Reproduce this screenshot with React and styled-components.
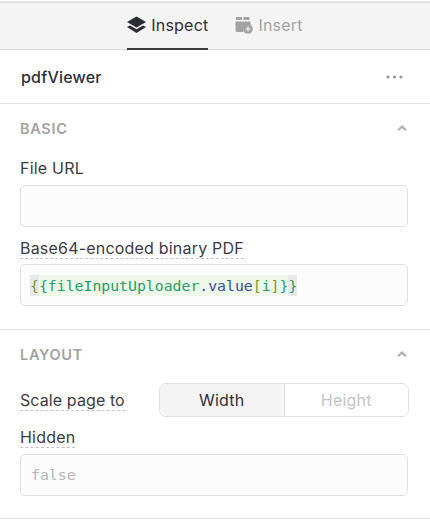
import React from 'react'
import styled, { createGlobalStyle } from 'styled-components'

const GlobalStyle = createGlobalStyle`
  html, body {
    margin: 0;
    background: #fff;
    font-family: Inter, "Liberation Sans", sans-serif;
  }
`

const Panel = styled.div`
  width: 430px;
  height: 523px;
  overflow: hidden;
  box-sizing: border-box;
  padding-top: 1px;
  background: #fff;
`

const Tabs = styled.div`
  display: flex;
  justify-content: center;
  gap: 27px;
  height: 49px;
  box-sizing: border-box;
  background: #f4f4f4;
  border-top: 2px solid #e3e3e3;
  border-bottom: 1px solid #dcdcdc;
`

const Tab = styled.div`
  display: flex;
  align-items: center;
  gap: 5px;
  height: 47px;
  box-sizing: border-box;
  padding-bottom: 2px;
  font-size: 16px;
  letter-spacing: 0.2px;
  color: ${p => (p.$active ? '#2f2f3a' : '#a3a3a3')};
  border-bottom: 2px solid ${p => (p.$active ? '#3a3a3a' : 'transparent')};
`

const NameRow = styled.div`
  display: flex;
  align-items: center;
  justify-content: space-between;
  height: 54px;
  box-sizing: border-box;
  padding: 0 27px 0 21px;
  border-bottom: 1px solid #e0e0e0;
`

const WidgetName = styled.div`
  font-size: 16px;
  font-weight: 500;
  letter-spacing: 0.2px;
  color: #2f2f3a;
`

const Section = styled.section`
  box-sizing: border-box;
  height: ${p => p.$height}px;
  padding: 14px 22px 0 20px;
  border-bottom: 1px solid #e3e3e3;
`

const SectionHeader = styled.div`
  display: flex;
  align-items: center;
  justify-content: space-between;
  height: 20px;
  margin-bottom: ${p => p.$gap}px;
  font-size: 14.5px;
  font-weight: 600;
  letter-spacing: 0.7px;
  color: #a2a2a2;
`

const Label = styled.div`
  display: flex;
  align-items: flex-end;
  height: 20px;
  margin-bottom: ${p => p.$gap || 7}px;
  font-size: 16px;
  letter-spacing: 0.2px;
  color: #3b3b44;
`

const Dashed = styled.span`
  border-bottom: 1px dashed #c4c4c4;
  line-height: 20px;
`

const Input = styled.div`
  display: flex;
  align-items: center;
  height: 42px;
  box-sizing: border-box;
  margin-bottom: ${p => p.$gap || 0}px;
  padding: 0 9px;
  background: #fcfcfc;
  border: 1px solid #e0e0e0;
  border-radius: 5px;
  font-family: "DejaVu Sans Mono", "Liberation Mono", monospace;
  font-size: 14.8px;
  color: #b5b5b5;
`

const Placeholder = styled.span`
  padding: 0 0 2px 1px;
`

const Code = styled.span`
  display: inline-block;
  line-height: 21px;
  background: ${p => (p.$outer ? '#e8e8e8' : '#eff7ea')};
  color: ${p => p.$color || '#22a06b'};
`

const Token = styled.span`
  color: ${p => p.$color};
`

const ScaleRow = styled.div`
  display: flex;
  align-items: center;
  justify-content: space-between;
  height: 34px;
  margin-right: -1px;
  margin-bottom: 11px;
  font-size: 16px;
  letter-spacing: 0.1px;
  color: #3b3b44;
`

const Segmented = styled.div`
  display: flex;
  width: 250px;
  height: 34px;
  box-sizing: border-box;
  border: 1px solid #e0e0e0;
  border-radius: 7px;
  overflow: hidden;
`

const Segment = styled.div`
  flex: 1;
  display: flex;
  align-items: center;
  justify-content: center;
  font-size: 16px;
  letter-spacing: 0.2px;
  background: ${p => (p.$active ? '#f4f4f4' : '#fff')};
  color: ${p => (p.$active ? '#2f2f3a' : '#c4c4c4')};
  border-right: ${p => (p.$active ? '1px solid #e0e0e0' : 'none')};
`

const Chevron = () => (
  <svg width="12" height="8" viewBox="0 0 12 8" fill="none" stroke="#b0b0b0" strokeWidth="2.2">
    <path d="M2 6.2 6 2.6l4 3.6" />
  </svg>
)

const LayersIcon = () => (
  <svg width="19" height="20" viewBox="0 0 19 20" fill="#2b2b33">
    <path d="M9.5 1.5 19 7l-9.5 5.5L0 7z" />
    <path d="M3 10.4l6.5 3.9 6.5-3.9L19 12l-9.5 6L0 12z" />
  </svg>
)

const InsertIcon = () => (
  <svg width="18" height="20" viewBox="0 0 18 20" fill="#a3a3a3">
    <rect x="1" y="2" width="6" height="3" />
    <rect x="8.5" y="2" width="6" height="3" />
    <path d="M0.5 6.5h15v5A5.5 5.5 0 0 0 8.4 17H2A1.5 1.5 0 0 1 0.5 15.5z" />
    <circle cx="13" cy="14" r="4.8" />
    <path d="M13 11.6v4.8M10.6 14h4.8" stroke="#f4f4f4" strokeWidth="1.2" />
  </svg>
)

const MoreIcon = () => (
  <svg width="17" height="4" viewBox="0 0 17 4" fill="#999">
    <circle cx="2" cy="2" r="1.6" />
    <circle cx="8.5" cy="2" r="1.6" />
    <circle cx="15" cy="2" r="1.6" />
  </svg>
)

export default function App() {
  return (
    <Panel>
      <GlobalStyle />
      <Tabs>
        <Tab $active>
          <LayersIcon />
          Inspect
        </Tab>
        <Tab>
          <InsertIcon />
          Insert
        </Tab>
      </Tabs>
      <NameRow>
        <WidgetName>pdfViewer</WidgetName>
        <MoreIcon />
      </NameRow>
      <Section $height={226}>
        <SectionHeader $gap={20}>
          BASIC
          <Chevron />
        </SectionHeader>
        <Label>File URL</Label>
        <Input $gap={12} />
        <Label $gap={5}>
          <Dashed>Base64-encoded binary PDF</Dashed>
        </Label>
        <Input>
          <Code $outer $color="#7c9a2d">{'{'}</Code>
          <Code>
            {'{'}fileInputUploader<Token $color="#30509c">.value</Token>
            <Token $color="#7c9a2d">[</Token>
            <Token $color="#22a06b">i</Token>
            <Token $color="#7c9a2d">]</Token>
            {'}'}
          </Code>
          <Code $outer>{'}'}</Code>
        </Input>
      </Section>
      <Section $height={189}>
        <SectionHeader $gap={19}>
          LAYOUT
          <Chevron />
        </SectionHeader>
        <ScaleRow>
          <Dashed>Scale page to</Dashed>
          <Segmented>
            <Segment $active>Width</Segment>
            <Segment>Height</Segment>
          </Segmented>
        </ScaleRow>
        <Label $gap={6}>
          <Dashed>Hidden</Dashed>
        </Label>
        <Input>
          <Placeholder>false</Placeholder>
        </Input>
      </Section>
    </Panel>
  )
}
